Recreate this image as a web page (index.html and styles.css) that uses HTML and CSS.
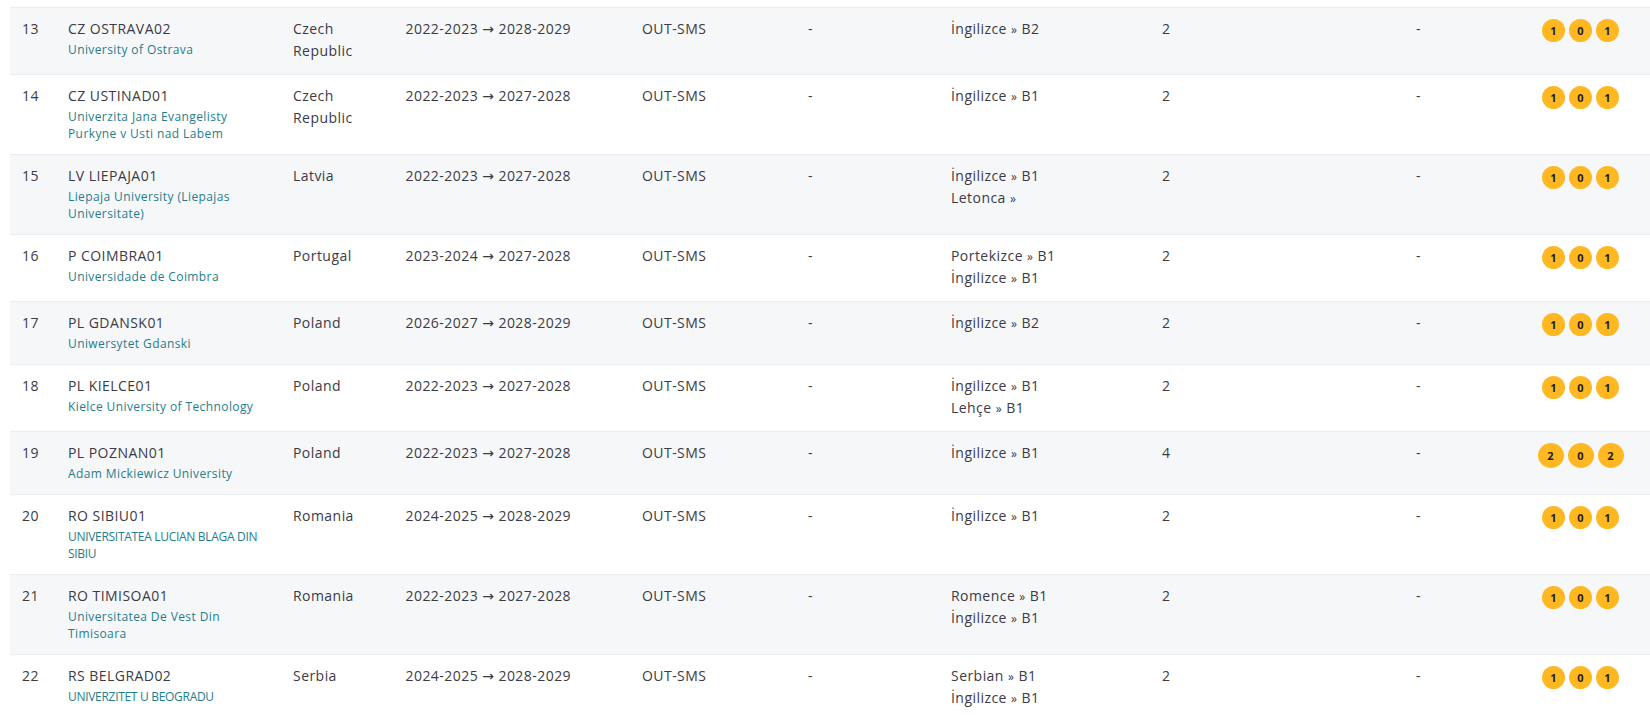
FILE: index.html
```html
<!DOCTYPE html>
<html lang="tr">
<head>
<meta charset="utf-8">
<title>Anlaşmalar</title>
<link rel="stylesheet" href="styles.css">
</head>
<body>
<div class="wrap">
<table class="list">
  <colgroup>
    <col class="c-no"><col class="c-inst"><col class="c-country"><col class="c-period"><col class="c-type">
    <col class="c-sub"><col class="c-lang"><col class="c-quota"><col class="c-extra"><col class="c-badges">
  </colgroup>
  <tbody>
    <tr>
      <td>13</td>
      <td><div class="code">CZ OSTRAVA02</div><div class="inst">University of Ostrava</div></td>
      <td>Czech Republic</td>
      <td>2022-2023 → 2028-2029</td>
      <td>OUT-SMS</td>
      <td>-</td>
      <td><div>İngilizce <span class="sep">»</span> B2</div></td>
      <td>2</td>
      <td>-</td>
      <td class="badges"><span class="bdg">1</span><span class="bdg">0</span><span class="bdg">1</span></td>
    </tr>
    <tr>
      <td>14</td>
      <td><div class="code">CZ USTINAD01</div><div class="inst">Univerzita Jana Evangelisty Purkyne v Usti nad Labem</div></td>
      <td>Czech Republic</td>
      <td>2022-2023 → 2027-2028</td>
      <td>OUT-SMS</td>
      <td>-</td>
      <td><div>İngilizce <span class="sep">»</span> B1</div></td>
      <td>2</td>
      <td>-</td>
      <td class="badges"><span class="bdg">1</span><span class="bdg">0</span><span class="bdg">1</span></td>
    </tr>
    <tr>
      <td>15</td>
      <td><div class="code">LV LIEPAJA01</div><div class="inst">Liepaja University (Liepajas Universitate)</div></td>
      <td>Latvia</td>
      <td>2022-2023 → 2027-2028</td>
      <td>OUT-SMS</td>
      <td>-</td>
      <td><div>İngilizce <span class="sep">»</span> B1</div><div>Letonca <span class="sep">»</span></div></td>
      <td>2</td>
      <td>-</td>
      <td class="badges"><span class="bdg">1</span><span class="bdg">0</span><span class="bdg">1</span></td>
    </tr>
    <tr>
      <td>16</td>
      <td><div class="code">P COIMBRA01</div><div class="inst">Universidade de Coimbra</div></td>
      <td>Portugal</td>
      <td>2023-2024 → 2027-2028</td>
      <td>OUT-SMS</td>
      <td>-</td>
      <td><div>Portekizce <span class="sep">»</span> B1</div><div>İngilizce <span class="sep">»</span> B1</div></td>
      <td>2</td>
      <td>-</td>
      <td class="badges"><span class="bdg">1</span><span class="bdg">0</span><span class="bdg">1</span></td>
    </tr>
    <tr>
      <td>17</td>
      <td><div class="code">PL GDANSK01</div><div class="inst">Uniwersytet Gdanski</div></td>
      <td>Poland</td>
      <td>2026-2027 → 2028-2029</td>
      <td>OUT-SMS</td>
      <td>-</td>
      <td><div>İngilizce <span class="sep">»</span> B2</div></td>
      <td>2</td>
      <td>-</td>
      <td class="badges"><span class="bdg">1</span><span class="bdg">0</span><span class="bdg">1</span></td>
    </tr>
    <tr>
      <td>18</td>
      <td><div class="code">PL KIELCE01</div><div class="inst">Kielce University of Technology</div></td>
      <td>Poland</td>
      <td>2022-2023 → 2027-2028</td>
      <td>OUT-SMS</td>
      <td>-</td>
      <td><div>İngilizce <span class="sep">»</span> B1</div><div>Lehçe <span class="sep">»</span> B1</div></td>
      <td>2</td>
      <td>-</td>
      <td class="badges"><span class="bdg">1</span><span class="bdg">0</span><span class="bdg">1</span></td>
    </tr>
    <tr>
      <td>19</td>
      <td><div class="code">PL POZNAN01</div><div class="inst">Adam Mickiewicz University</div></td>
      <td>Poland</td>
      <td>2022-2023 → 2027-2028</td>
      <td>OUT-SMS</td>
      <td>-</td>
      <td><div>İngilizce <span class="sep">»</span> B1</div></td>
      <td>4</td>
      <td>-</td>
      <td class="badges"><span class="bdg wide">2</span><span class="bdg wide">0</span><span class="bdg wide">2</span></td>
    </tr>
    <tr>
      <td>20</td>
      <td><div class="code">RO SIBIU01</div><div class="inst caps">UNIVERSITATEA LUCIAN BLAGA DIN SIBIU</div></td>
      <td>Romania</td>
      <td>2024-2025 → 2028-2029</td>
      <td>OUT-SMS</td>
      <td>-</td>
      <td><div>İngilizce <span class="sep">»</span> B1</div></td>
      <td>2</td>
      <td>-</td>
      <td class="badges"><span class="bdg">1</span><span class="bdg">0</span><span class="bdg">1</span></td>
    </tr>
    <tr>
      <td>21</td>
      <td><div class="code">RO TIMISOA01</div><div class="inst">Universitatea De Vest Din Timisoara</div></td>
      <td>Romania</td>
      <td>2022-2023 → 2027-2028</td>
      <td>OUT-SMS</td>
      <td>-</td>
      <td><div>Romence <span class="sep">»</span> B1</div><div>İngilizce <span class="sep">»</span> B1</div></td>
      <td>2</td>
      <td>-</td>
      <td class="badges"><span class="bdg">1</span><span class="bdg">0</span><span class="bdg">1</span></td>
    </tr>
    <tr>
      <td>22</td>
      <td><div class="code">RS BELGRAD02</div><div class="inst caps">UNIVERZITET U BEOGRADU</div></td>
      <td>Serbia</td>
      <td>2024-2025 → 2028-2029</td>
      <td>OUT-SMS</td>
      <td>-</td>
      <td><div>Serbian <span class="sep">»</span> B1</div><div>İngilizce <span class="sep">»</span> B1</div></td>
      <td>2</td>
      <td>-</td>
      <td class="badges"><span class="bdg">1</span><span class="bdg">0</span><span class="bdg">1</span></td>
    </tr>
  </tbody>
</table>
</div>
</body>
</html>
```

FILE: styles.css
```css
html, body {
  margin: 0;
  padding: 0;
  background: #ffffff;
}

body {
  font-family: "Open Sans", "DejaVu Sans", sans-serif;
  color: #3a3b45;
  overflow: hidden;
}

.wrap {
  padding: 7px 0 0 10px;
}

.list {
  width: 1640px;
  border-collapse: collapse;
  table-layout: fixed;
  font-size: 14px;
  line-height: 22px;
  letter-spacing: 0.45px;
}

.c-no { width: 46px; }
.c-inst { width: 225px; }
.c-country { width: 112.5px; }
.c-period { width: 236.5px; }
.c-type { width: 166px; }
.c-sub { width: 143px; }
.c-lang { width: 211px; }
.c-quota { width: 254px; }
.c-extra { width: 107px; }
.c-badges { width: 139px; }

.list td {
  padding: 10px 12px 12px 12px;
  vertical-align: top;
  border-top: 1px solid #ebedf2;
}

.list tr:nth-child(odd) td {
  background: #f6f7f9;
}

.inst {
  font-size: 12px;
  line-height: 17px;
  letter-spacing: 0.4px;
  color: #1f7d8c;
  margin-top: 1px;
}

.inst.caps {
  letter-spacing: -0.3px;
}

.sep {
  font-size: 12px;
  line-height: 0;
}

.badges {
  text-align: center;
}

.badges .bdg {
  display: inline-flex;
  align-items: center;
  justify-content: center;
  width: 23px;
  height: 23px;
  margin: 1px 2px 0;
  border-radius: 50%;
  background: #ffb822;
  color: #1b1b28;
  font-size: 11px;
  font-weight: 700;
  letter-spacing: 0;
  line-height: 1;
  vertical-align: top;
}

.badges .bdg.wide {
  width: 26px;
  height: 25px;
}
```
